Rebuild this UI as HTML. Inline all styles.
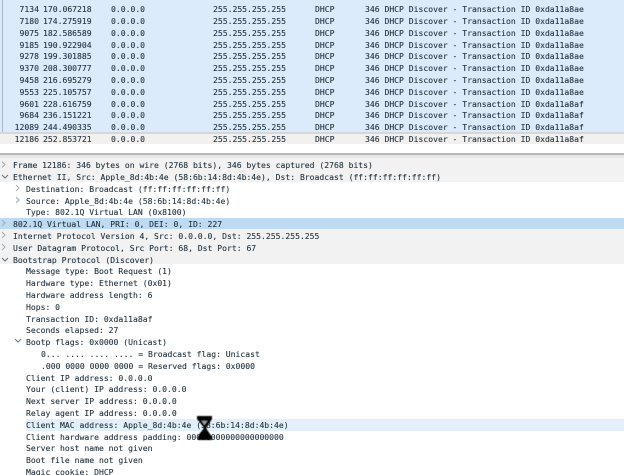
<!DOCTYPE html>
<html><head><meta charset="utf-8"><style>
html,body{margin:0;padding:0;background:#fff}
#p{position:relative;width:624px;height:475px;overflow:hidden;background:#fff;font:8.08px/12px "DejaVu Sans Mono",monospace;color:#22323d}
.b{position:absolute}
.t{position:absolute;white-space:pre;height:12px;-webkit-text-stroke:.1px #22323d}
.n{text-align:right;left:0;width:39px}
#w{position:absolute;left:0;top:3px;width:624px;height:475px;filter:blur(.3px)}
</style></head><body><div id="p">
<div class="b" style="left:0;top:0;width:624px;height:133px;background:#dcebfb"></div>
<div class="b" style="left:2px;top:0;width:1px;height:139px;background:#a8b8c6"></div>
<div class="b" style="left:2px;top:139px;width:6px;height:1px;background:#a8b8c6"></div>
<div class="b" style="left:0;top:132px;width:624px;height:2px;background:#d4d8dc"></div>
<div class="b" style="left:0;top:134px;width:624px;height:10px;background:#f2f1ef"></div>
<div class="b" style="left:0;top:153px;width:624px;height:2px;background:#b8b8b8"></div>
<div class="b" style="left:0;top:155px;width:624px;height:3px;background:#e6e6e6"></div>
<div class="b" style="left:0;top:158px;width:624px;height:24px;background:#f2f2f2"></div>
<div class="b" style="left:0;top:218px;width:624px;height:11px;background:#bedbf3"></div>
<div class="b" style="left:0;top:229px;width:624px;height:35px;background:#f2f2f2"></div>
<div class="b" style="left:26px;top:419px;width:598px;height:12px;background:#e3f0fb"></div>

<div id="w">
<span class="t n" style="top:0px">7134</span><span class="t" style="left:43px;top:0px">170.067218</span><span class="t" style="left:111px;top:0px">0.0.0.0</span><span class="t" style="left:213px;top:0px">255.255.255.255</span><span class="t" style="left:315px;top:0px">DHCP</span><span class="t" style="left:365px;top:0px">346 DHCP Discover - Transaction ID 0xda11a8ae</span>
<span class="t n" style="top:12px">7180</span><span class="t" style="left:43px;top:12px">174.275919</span><span class="t" style="left:111px;top:12px">0.0.0.0</span><span class="t" style="left:213px;top:12px">255.255.255.255</span><span class="t" style="left:315px;top:12px">DHCP</span><span class="t" style="left:365px;top:12px">346 DHCP Discover - Transaction ID 0xda11a8ae</span>
<span class="t n" style="top:24px">9075</span><span class="t" style="left:43px;top:24px">182.586589</span><span class="t" style="left:111px;top:24px">0.0.0.0</span><span class="t" style="left:213px;top:24px">255.255.255.255</span><span class="t" style="left:315px;top:24px">DHCP</span><span class="t" style="left:365px;top:24px">346 DHCP Discover - Transaction ID 0xda11a8ae</span>
<span class="t n" style="top:36px">9185</span><span class="t" style="left:43px;top:36px">190.922904</span><span class="t" style="left:111px;top:36px">0.0.0.0</span><span class="t" style="left:213px;top:36px">255.255.255.255</span><span class="t" style="left:315px;top:36px">DHCP</span><span class="t" style="left:365px;top:36px">346 DHCP Discover - Transaction ID 0xda11a8ae</span>
<span class="t n" style="top:47px">9278</span><span class="t" style="left:43px;top:47px">199.301885</span><span class="t" style="left:111px;top:47px">0.0.0.0</span><span class="t" style="left:213px;top:47px">255.255.255.255</span><span class="t" style="left:315px;top:47px">DHCP</span><span class="t" style="left:365px;top:47px">346 DHCP Discover - Transaction ID 0xda11a8ae</span>
<span class="t n" style="top:59px">9370</span><span class="t" style="left:43px;top:59px">208.300777</span><span class="t" style="left:111px;top:59px">0.0.0.0</span><span class="t" style="left:213px;top:59px">255.255.255.255</span><span class="t" style="left:315px;top:59px">DHCP</span><span class="t" style="left:365px;top:59px">346 DHCP Discover - Transaction ID 0xda11a8ae</span>
<span class="t n" style="top:71px">9458</span><span class="t" style="left:43px;top:71px">216.695279</span><span class="t" style="left:111px;top:71px">0.0.0.0</span><span class="t" style="left:213px;top:71px">255.255.255.255</span><span class="t" style="left:315px;top:71px">DHCP</span><span class="t" style="left:365px;top:71px">346 DHCP Discover - Transaction ID 0xda11a8ae</span>
<span class="t n" style="top:83px">9553</span><span class="t" style="left:43px;top:83px">225.105757</span><span class="t" style="left:111px;top:83px">0.0.0.0</span><span class="t" style="left:213px;top:83px">255.255.255.255</span><span class="t" style="left:315px;top:83px">DHCP</span><span class="t" style="left:365px;top:83px">346 DHCP Discover - Transaction ID 0xda11a8ae</span>
<span class="t n" style="top:95px">9601</span><span class="t" style="left:43px;top:95px">228.616759</span><span class="t" style="left:111px;top:95px">0.0.0.0</span><span class="t" style="left:213px;top:95px">255.255.255.255</span><span class="t" style="left:315px;top:95px">DHCP</span><span class="t" style="left:365px;top:95px">346 DHCP Discover - Transaction ID 0xda11a8af</span>
<span class="t n" style="top:106px">9684</span><span class="t" style="left:43px;top:106px">236.151221</span><span class="t" style="left:111px;top:106px">0.0.0.0</span><span class="t" style="left:213px;top:106px">255.255.255.255</span><span class="t" style="left:315px;top:106px">DHCP</span><span class="t" style="left:365px;top:106px">346 DHCP Discover - Transaction ID 0xda11a8af</span>
<span class="t n" style="top:118px">12089</span><span class="t" style="left:43px;top:118px">244.490335</span><span class="t" style="left:111px;top:118px">0.0.0.0</span><span class="t" style="left:213px;top:118px">255.255.255.255</span><span class="t" style="left:315px;top:118px">DHCP</span><span class="t" style="left:365px;top:118px">346 DHCP Discover - Transaction ID 0xda11a8af</span>
<span class="t n" style="top:130px">12186</span><span class="t" style="left:43px;top:130px">252.853721</span><span class="t" style="left:111px;top:130px">0.0.0.0</span><span class="t" style="left:213px;top:130px">255.255.255.255</span><span class="t" style="left:315px;top:130px">DHCP</span><span class="t" style="left:365px;top:130px">346 DHCP Discover - Transaction ID 0xda11a8af</span>

<span class="t" style="left:13px;top:156px">Frame 12186: 346 bytes on wire (2768 bits), 346 bytes captured (2768 bits)</span>
<span class="t" style="left:13px;top:168px">Ethernet II, Src: Apple_8d:4b:4e (58:6b:14:8d:4b:4e), Dst: Broadcast (ff:ff:ff:ff:ff:ff)</span>
<span class="t" style="left:26px;top:180px">Destination: Broadcast (ff:ff:ff:ff:ff:ff)</span>
<span class="t" style="left:26px;top:192px">Source: Apple_8d:4b:4e (58:6b:14:8d:4b:4e)</span>
<span class="t" style="left:26px;top:203px">Type: 802.1Q Virtual LAN (0x8100)</span>
<span class="t" style="left:13px;top:215px">802.1Q Virtual LAN, PRI: 0, DEI: 0, ID: 227</span>
<span class="t" style="left:13px;top:227px">Internet Protocol Version 4, Src: 0.0.0.0, Dst: 255.255.255.255</span>
<span class="t" style="left:13px;top:239px">User Datagram Protocol, Src Port: 68, Dst Port: 67</span>
<span class="t" style="left:13px;top:251px">Bootstrap Protocol (Discover)</span>
<span class="t" style="left:26px;top:262px">Message type: Boot Request (1)</span>
<span class="t" style="left:26px;top:274px">Hardware type: Ethernet (0x01)</span>
<span class="t" style="left:26px;top:286px">Hardware address length: 6</span>
<span class="t" style="left:26px;top:298px">Hops: 0</span>
<span class="t" style="left:26px;top:310px">Transaction ID: 0xda11a8af</span>
<span class="t" style="left:26px;top:321px">Seconds elapsed: 27</span>
<span class="t" style="left:26px;top:333px">Bootp flags: 0x0000 (Unicast)</span>
<span class="t" style="left:41px;top:345px">0... .... .... .... = Broadcast flag: Unicast</span>
<span class="t" style="left:41px;top:357px">.000 0000 0000 0000 = Reserved flags: 0x0000</span>
<span class="t" style="left:26px;top:369px">Client IP address: 0.0.0.0</span>
<span class="t" style="left:26px;top:380px">Your (client) IP address: 0.0.0.0</span>
<span class="t" style="left:26px;top:392px">Next server IP address: 0.0.0.0</span>
<span class="t" style="left:26px;top:404px">Relay agent IP address: 0.0.0.0</span>
<span class="t" style="left:26px;top:416px">Client MAC address: Apple_8d:4b:4e (58:6b:14:8d:4b:4e)</span>
<span class="t" style="left:26px;top:428px">Client hardware address padding: 00000000000000000000</span>
<span class="t" style="left:26px;top:439px">Server host name not given</span>
<span class="t" style="left:26px;top:451px">Boot file name not given</span>
<span class="t" style="left:26px;top:463px">Magic cookie: DHCP</span>
</div>

<svg class="b" style="left:0;top:158px" width="30" height="110" fill="none" stroke="#a4acb2" stroke-width="1">
<path d="M2 3.500l3 3-3 3"/><path d="M2 17l3 3 3-3" stroke="#66727a"/><path d="M16 27l3 3-3 3"/><path d="M16 39l3 3-3 3"/>
<path d="M2 62l3 3-3 3"/><path d="M2 74l3 3-3 3"/><path d="M2 86l3 3-3 3"/><path d="M2 100l3 3 3-3" stroke="#66727a"/>
</svg>
<svg class="b" style="left:14px;top:336px" width="10" height="10" fill="none" stroke="#66727a"><path d="M1 3l3 3 3-3"/></svg>

<svg class="b" style="left:196px;top:415px;filter:blur(.4px)" width="18" height="26">
<path d="M1 1H16V4L14 7 10.500 12V14L14 19 16 22V25H2V22L4 18 7.500 14V12L3.500 7 1 4Z" fill="#000"/>
<path d="M5 5.500H12L9 10H8Z" fill="#fff" opacity=".6"/>
</svg>
</div></body></html>
